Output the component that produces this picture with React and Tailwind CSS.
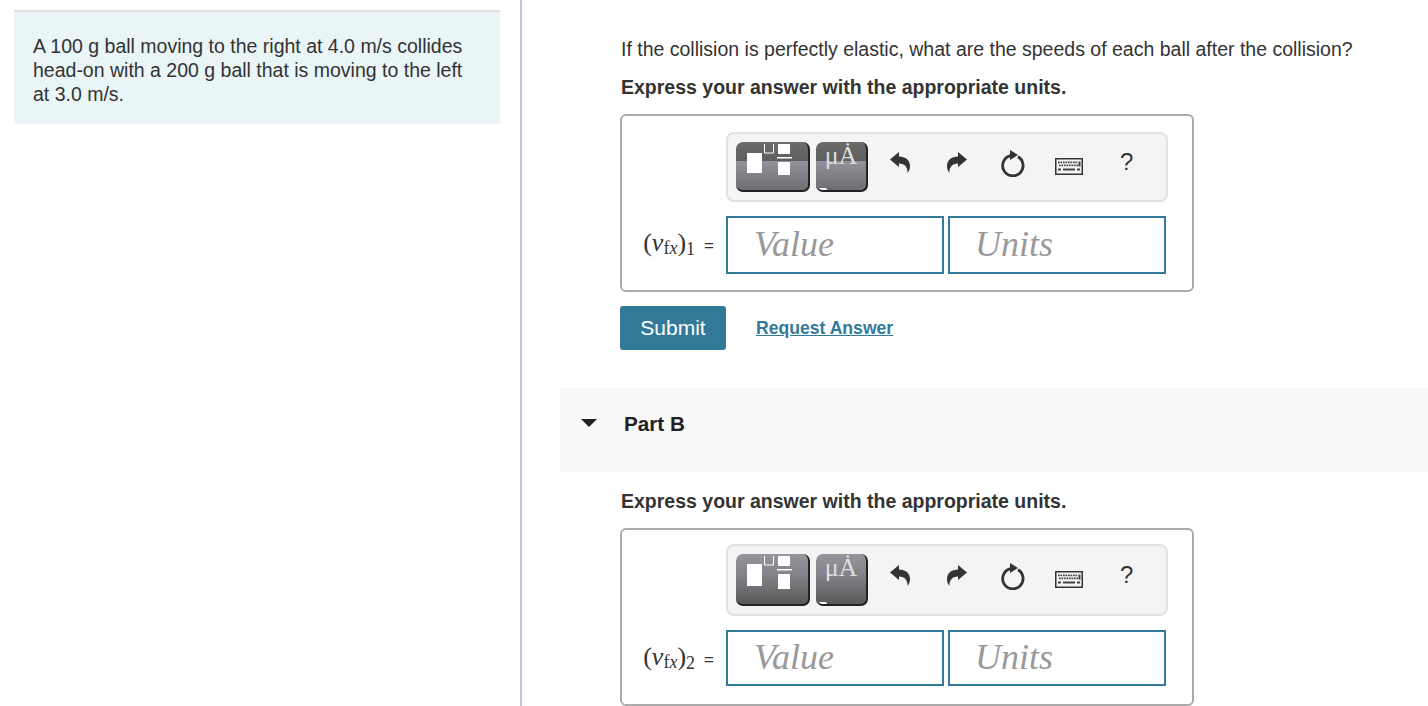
const sans = 'font-["Liberation_Sans",Arial,sans-serif]';
const serif = 'font-["Liberation_Serif","Times_New_Roman",serif]';

function TemplateIcon({ alt }) {
  // second toolbar draws its shapes a little differently
  const big = alt ? { y: 10, h: 22 } : { y: 11, h: 20 };
  const low = alt ? { y: 20, h: 15 } : { y: 20, h: 13 };
  return (
    <svg width="72" height="48" viewBox="0 0 72 48" className="block">
      <rect x="11" y={big.y} width="15" height={big.h} fill="#fff" />
      <path d="M28.5 2v9h9V2" fill="none" stroke="#fff" strokeWidth="1" />
      <rect x="42" y="2" width="12" height="10" fill="#fff" />
      <rect x="41" y="15" width="15" height="1.5" fill="#fff" />
      <rect x="42" y={low.y} width="12" height={low.h} fill="#fff" />
    </svg>
  );
}

function UndoIcon({ flip }) {
  return (
    <svg width="20" height="21" viewBox="0 0 20 21" className={flip ? '-scale-x-100' : ''}>
      <path d="M0 7.5 9 0v4.5c6.5 0 11 3.8 11 9.5 0 3-1 5.3-2.5 7 .5-5.5-2.5-9.6-8.500-9.600V15z" fill="#333" />
    </svg>
  );
}

function RefreshIcon() {
  return (
    <svg width="24" height="27" viewBox="0 0 24 27" className="block">
      <path d="M9.500 5.700A10.200 10.200 0 1 0 17 6.800" fill="none" stroke="#333" strokeWidth="2.8" />
      <path d="M9 0l8 5-8 5z" fill="#333" />
    </svg>
  );
}

function KeyboardIcon() {
  const keys = [];
  for (let i = 0; i < 8; i++) keys.push(<rect key={`a${i}`} x={3 + i * 2.5} y="3.500" width="1.700" height="1.700" fill="#444" />);
  for (let i = 0; i < 8; i++) keys.push(<rect key={`b${i}`} x={4 + i * 2.5} y="6.500" width="1.700" height="1.700" fill="#444" />);
  return (
    <svg width="28" height="17" viewBox="0 0 28 17" className="block">
      <rect x="0.750" y="0.750" width="26.500" height="15.500" fill="#f4f4f4" stroke="#333" strokeWidth="1.500" />
      {keys}
      <rect x="23.500" y="3.500" width="2" height="5" fill="#444" />
      <rect x="3" y="10.500" width="3" height="2" fill="#444" />
      <rect x="8" y="10.500" width="12" height="2" fill="#444" />
      <rect x="22" y="10.500" width="3" height="2" fill="#444" />
    </svg>
  );
}

function AnswerBox({ index, alt, className }) {
  const btn = `rounded-[7px] border-r-2 border-b-2 border-[#222] overflow-hidden ${
    alt
      ? 'h-[52px] bg-[linear-gradient(#96959c_0%,#84838a_40%,#5a5a5a_100%)]'
      : 'h-[50px] bg-[linear-gradient(#6c6c6c_0%,#5e5e5e_39%,#94929a_40%,#6e6d72_100%)]'
  }`;
  const field = `w-[218px] border-2 border-[#337a9a] text-[36px] italic text-[#999999] ${serif} ${
    alt ? 'h-[56px] leading-[50px]' : 'h-[58px] leading-[52px]'
  }`;

  return (
    <div className={`w-[574px] h-[178px] shrink-0 border-2 border-[#aaaaaa] rounded-[6px] pl-[104px] ${alt ? 'pt-[14px]' : 'pt-4'} ${className || ''}`}>
      <div className={`w-[442px] bg-[#f4f4f4] border-2 border-[#e2e2e2] rounded-[8px] flex items-start pl-2 pt-2 ${alt ? 'h-[72px]' : 'h-[70px]'}`}>
        <div className={`${btn} w-[74px]`}>
          <TemplateIcon alt={alt} />
        </div>
        <div className={`${btn} w-[52px] ml-[6px] relative`}>
          <span className={`block text-center text-[26px] leading-[26px] pt-[1px] text-[#dedede] ${serif}`}>μȦ</span>
          <span className="absolute left-[2px] bottom-0 w-[9px] h-[2px] rounded-t-full bg-white" />
        </div>
        <div className={`flex items-start ${alt ? 'mt-px' : ''}`}>
          <span className="ml-[22px] mt-[10px]"><UndoIcon /></span>
          <span className="ml-[37px] mt-[10px]"><UndoIcon flip /></span>
          <span className="ml-[34px] mt-[8px]"><RefreshIcon /></span>
          <span className="ml-[30px] mt-[16px]"><KeyboardIcon /></span>
          <span className={`ml-[37px] mt-[8px] text-[24px] leading-[24px] text-[#333] ${sans}`}>?</span>
        </div>
      </div>
      <div className="flex mt-[14px] relative">
        <div className={`absolute right-[calc(100%+12px)] top-[11px] whitespace-nowrap text-[26px] leading-[32px] text-[#333] ${serif}`}>
          (<i>v</i>
          <span className="text-[18px] align-[-3px]">f<i>x</i></span>)
          <span className="text-[18px] align-[-4px]">{index}</span>
          <span className={`ml-[9px] text-[17px] ${sans}`}>=</span>
        </div>
        <div className={`${field} pl-[26px]`}>Value</div>
        <div className={`${field} pl-[25px] ml-1`}>Units</div>
      </div>
    </div>
  );
}

export default function App() {
  return (
    <div className={`h-[706px] overflow-hidden bg-white flex text-[#333] ${sans}`}>
      <div className="w-[522px] shrink-0 border-r-2 border-[#bccadb] pt-[10px] pl-[14px]">
        <div className="w-[486px] h-[114px] bg-[#e9f5f7] border-t-2 border-[#e0e0e0] pt-[22px] pl-[19px] text-[19.5px] leading-[24px]">
          A 100 g ball moving to the right at 4.0 m/s collides<br />
          head-on with a 200 g ball that is moving to the left<br />
          at 3.0 m/s.
        </div>
      </div>

      <div className="flex-1 pt-[37px] pl-[38px]">
        <div className="pl-[60px]">
          <p className="ml-px text-[19.5px] leading-[24px] whitespace-nowrap">
            If the collision is perfectly elastic, what are the speeds of each ball after the collision?
          </p>
          <p className="ml-px mt-[14px] text-[19.5px] leading-[24px] font-bold">Express your answer with the appropriate units.</p>
          <AnswerBox index="1" className="mt-[15px]" />
          <div className="flex items-center mt-[14px]">
            <button className="w-[106px] h-[44px] rounded-[3px] bg-[#337a9a] text-white text-[21px]">Submit</button>
            <a className="ml-[30px] text-[#337a9a] text-[17.6px] font-bold underline">Request Answer</a>
          </div>
        </div>

        <div className="mt-[38px] h-[84px] bg-[#f9f9f9] flex items-start pl-[21px] pt-[24px]">
          <svg width="16" height="8" viewBox="0 0 16 8" className="mt-[7px]">
            <path d="M0 0h16L8 8z" fill="#222" />
          </svg>
          <span className="ml-[27px] text-[20.7px] leading-[24px] font-bold text-[#222]">Part B</span>
        </div>

        <div className="pl-[60px]">
          <p className="ml-px mt-[17px] text-[19.5px] leading-[24px] font-bold">Express your answer with the appropriate units.</p>
          <AnswerBox index="2" alt className="mt-[15px]" />
        </div>
      </div>
    </div>
  );
}
